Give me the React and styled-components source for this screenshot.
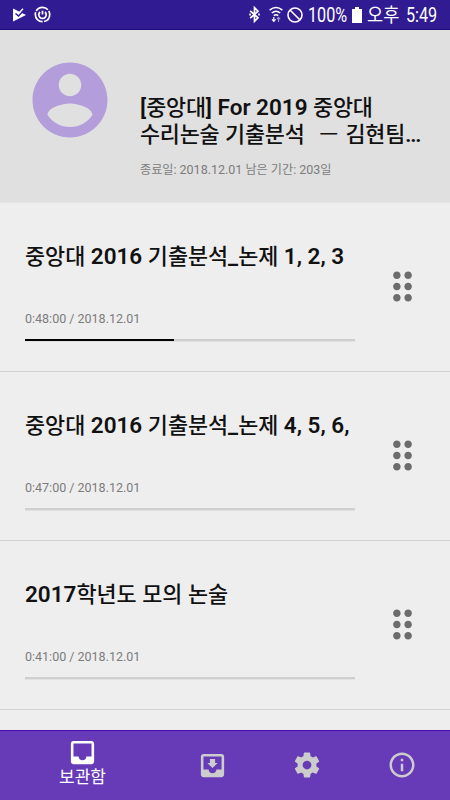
import React from "react";
import styled, { createGlobalStyle } from "styled-components";

const GlobalStyle = createGlobalStyle`
  body {
    margin: 0;
    background: #eeeeee;
    font-family: Roboto, "Noto Sans CJK KR", sans-serif;
  }
  * {
    box-sizing: border-box;
  }
`;

const Screen = styled.div`
  width: 450px;
  height: 800px;
  display: flex;
  flex-direction: column;
  overflow: hidden;
  background: #eeeeee;
`;

const StatusBar = styled.header`
  height: 30px;
  flex-shrink: 0;
  display: flex;
  justify-content: space-between;
  padding: 0 12px;
  background: #311b92;
  border-bottom: 1px solid #1c0a76;
  color: #fff;
`;

const StatusIcons = styled.div`
  display: flex;
  align-items: center;
  gap: 7px;
`;

const StatusInfo = styled.div`
  display: flex;
  align-items: center;
`;

const StatusText = styled.span`
  width: ${(props) => props.$width}px;
  margin-left: ${(props) => props.$gap || 0}px;
  padding-top: 2px;
  font-size: 19.5px;
  line-height: 29px;
  white-space: nowrap;
  transform: scaleX(${(props) => props.$scale});
  transform-origin: left center;
`;

const StatusIcon = styled.svg`
  display: block;
  flex-shrink: 0;
  margin-left: ${(props) => props.$gap || 0}px;
`;

const CourseHeader = styled.section`
  height: 173px;
  flex-shrink: 0;
  display: flex;
  padding: 25px 25px 0;
  background: #e0e0e0;
  border-bottom: 1px solid #e6e6e6;
`;

const CourseText = styled.div`
  flex: 1;
  min-width: 0;
  padding: 39px 0 0 25px;
`;

const CourseTitle = styled.h1`
  margin: 0;
  font-size: 22.5px;
  font-weight: 600;
  line-height: 27px;
  color: #111;
  white-space: pre;
`;

const Caption = styled.p`
  margin: ${(props) => props.$top}px 0 0;
  font-size: 12.5px;
  line-height: 16px;
  color: #7c7c7c;
  white-space: nowrap;
`;

const Hangul = styled.span`
  font-size: 0.97em;
  font-weight: ${(props) => (props.$heading ? 500 : "inherit")};
  line-height: 1;

  ${CourseTitle} & {
    letter-spacing: -0.2px;
  }
`;

const Dash = styled.span`
  margin: 0 1.5px 0 3.5px;
  font-size: 0.92em;
  font-weight: 400;
  line-height: 1;
`;

const Lectures = styled.main`
  flex: 1;
  min-height: 0;
  overflow: hidden;
`;

const LectureRow = styled.article`
  height: 169px;
  display: flex;
  align-items: center;
  justify-content: space-between;
  padding: 0 25px;
  border-bottom: 1px solid #d3d3d3;
`;

const LectureBody = styled.div`
  width: 330px;
  height: 100%;
  padding-top: 39px;
`;

const LectureTitle = styled.h2`
  margin: 0;
  font-size: 22.5px;
  font-weight: 600;
  line-height: 28px;
  color: #111;
  white-space: nowrap;
`;

const Track = styled.div`
  height: 2px;
  margin-top: 12px;
  background: #cfcfcf;
  box-shadow: 0 1px 0 #e2e2e2;
`;

const Fill = styled.div`
  height: 100%;
  background: #000;
`;

const DragHandle = styled.div`
  display: flex;
  padding-bottom: 1px;
  color: #6c6c6c;
`;

const BottomNav = styled.nav`
  height: 70px;
  flex-shrink: 0;
  display: flex;
  border-top: 1px solid #4a0bac;
  background: #673ab7;
`;

const NavItem = styled.button`
  width: ${(props) => props.$width}px;
  display: flex;
  flex-direction: column;
  align-items: center;
  justify-content: ${(props) => (props.$active ? "flex-start" : "center")};
  padding: ${(props) => (props.$active ? "6px 0 0" : "0 0 1px 0")};
  border: none;
  background: none;
  color: ${(props) => (props.$active ? "#fff" : "#cccccc")};
  font-family: inherit;
`;

const NavLabel = styled.span`
  font-size: 17px;
  line-height: 20px;
  margin-top: -1px;
`;

const Icon = ({ d, size }) => (
  <svg width={size} height={size} viewBox="0 0 24 24" fill="currentColor">
    <path d={d} />
  </svg>
);

// Hangul is set slightly smaller than the Latin letters around it
const MixedText = ({ children, heading }) =>
  children.split(/([가-힣]+|ㅡ)/).map((part, i) => {
    if (part === "ㅡ") return <Dash key={i}>{part}</Dash>;
    if (/[가-힣]/.test(part)) {
      return (
        <Hangul key={i} $heading={heading}>
          {part}
        </Hangul>
      );
    }
    return part;
  });

const icons = {
  account:
    "M12 2C6.48 2 2 6.48 2 12s4.48 10 10 10 10-4.48 10-10S17.52 2 12 2zm0 3c1.66 0 3 1.34 3 3s-1.34 3-3 3-3-1.34-3-3 1.34-3 3-3zm0 14.2c-2.5 0-4.71-1.28-6-3.22.03-1.99 4-3.08 6-3.08 1.99 0 5.97 1.09 6 3.08-1.29 1.94-3.5 3.22-6 3.22z",
  drag: "M11 18c0 1.1-.9 2-2 2s-2-.9-2-2 .9-2 2-2 2 .9 2 2zm-2-8c-1.1 0-2 .9-2 2s.9 2 2 2 2-.9 2-2-.9-2-2-2zm0-6c-1.1 0-2 .9-2 2s.9 2 2 2 2-.9 2-2-.9-2-2-2zm6 4c1.1 0 2-.9 2-2s-.9-2-2-2-2 .9-2 2 .9 2 2 2zm0 2c-1.1 0-2 .9-2 2s.9 2 2 2 2-.9 2-2-.9-2-2-2zm0 6c-1.1 0-2 .9-2 2s.9 2 2 2 2-.9 2-2-.9-2-2-2z",
  inbox:
    "M19 3H4.99c-1.11 0-1.98.89-1.98 2L3 19c0 1.1.88 2 1.99 2H19c1.1 0 2-.9 2-2V5c0-1.11-.9-2-2-2zm0 12h-4c0 1.66-1.35 3-3 3s-3-1.34-3-3H4.99V5H19v10z",
  download:
    "M19 3H4.99c-1.11 0-1.98.9-1.98 2L3 19c0 1.1.88 2 1.99 2H19c1.1 0 2-.9 2-2V5c0-1.1-.9-2-2-2zm0 12h-4c0 1.66-1.35 3-3 3s-3-1.34-3-3H4.99V5H19v10zm-3-5h-2V7h-4v3H8l4 4 4-4z",
  settings:
    "M19.43 12.98c.04-.32.07-.64.07-.98s-.03-.66-.07-.98l2.11-1.65c.19-.15.24-.42.12-.64l-2-3.46c-.12-.22-.39-.3-.61-.22l-2.49 1c-.52-.4-1.08-.73-1.69-.98l-.38-2.65C14.46 2.18 14.25 2 14 2h-4c-.25 0-.46.18-.49.42l-.38 2.65c-.61.25-1.17.59-1.69.98l-2.49-1c-.23-.09-.49 0-.61.22l-2 3.46c-.13.22-.07.49.12.64l2.11 1.65c-.04.32-.07.65-.07.98s.03.66.07.98l-2.11 1.65c-.19.15-.24.42-.12.64l2 3.46c.12.22.39.3.61.22l2.49-1c.52.4 1.08.73 1.69.98l.38 2.65c.03.24.24.42.49.42h4c.25 0 .46-.18.49-.42l.38-2.65c.61-.25 1.17-.59 1.69-.98l2.49 1c.23.09.49 0 .61-.22l2-3.46c.12-.22.07-.49-.12-.64l-2.11-1.65zM12 15.5c-1.93 0-3.5-1.57-3.5-3.5s1.57-3.5 3.5-3.5 3.5 1.57 3.5 3.5-1.57 3.5-3.5 3.5z",
  info: "M11 17h2v-6h-2v6zm1-15C6.48 2 2 6.48 2 12s4.48 10 10 10 10-4.48 10-10S17.52 2 12 2zm0 18c-4.41 0-8-3.59-8-8s3.59-8 8-8 8 3.59 8 8-3.59 8-8 8zM11 9h2V7h-2v2z",
};

const lectures = [
  { title: "중앙대 2016 기출분석_논제 1, 2, 3", length: "0:48:00", progress: 45 },
  { title: "중앙대 2016 기출분석_논제 4, 5, 6,", length: "0:47:00", progress: 0 },
  { title: "2017학년도 모의 논술", length: "0:41:00", progress: 0 },
];

const Status = () => (
  <StatusBar>
    <StatusIcons>
      <StatusIcon width="15" height="16" viewBox="0 0 15 16">
        <path d="M1 1.5L14 8L1 14.5Z" fill="#fff" />
        <path d="M3.5 6.5L6.5 9L12 3" fill="none" stroke="#311b92" strokeWidth="1.5" />
        <path d="M7 6L11 1.8" stroke="#fff" strokeWidth="1.4" />
      </StatusIcon>
      <StatusIcon width="17" height="17" viewBox="0 0 17 17" fill="none" stroke="#fff">
        <circle cx="8.5" cy="8.5" r="7.2" strokeWidth="1.7" strokeDasharray="13.6 1.48" strokeDashoffset="4" />
        <path d="M6 6A3.7 3.7 0 1 0 11 6M8.5 4.8V8.5" strokeWidth="1.7" />
      </StatusIcon>
    </StatusIcons>
    <StatusInfo>
      <StatusIcon width="11" height="17" viewBox="0 0 11 17" fill="none" stroke="#fff" strokeWidth="1.7">
        <path d="M1.2 4.8L9 11.8L5.5 15.3V1.7L9 5.2L1.2 12.2" />
        <path d="M.2 8.5H1.8M9.2 8.5H10.8" strokeWidth="1.8" />
      </StatusIcon>
      <StatusIcon $gap={9} width="14" height="17" viewBox="0 0 14 17" fill="none" stroke="#fff" strokeWidth="1.6">
        <path d="M.6 4.2Q7-1.2 13.4 4.2M2.8 7Q7 3.5 11.2 7M4.8 9.7Q7 7.8 9.2 9.7" />
        <path d="M4.8 11V15.3M3 13.4L4.8 15.3L6.6 13.4" strokeWidth="1.2" />
        <path d="M9.5 16V11.5M7.9 13.2L9.5 11.4L11.1 13.2" strokeWidth="1.1" opacity=".55" />
      </StatusIcon>
      <StatusIcon $gap={4} width="16" height="16" viewBox="0 0 16 16" fill="none" stroke="#fff" strokeWidth="1.6">
        <circle cx="8" cy="8" r="7" />
        <path d="M3 3L13 13" />
      </StatusIcon>
      <StatusText $gap={5} $width={43} $scale={0.83}>100%</StatusText>
      <StatusIcon $gap={1} width="10" height="16" viewBox="0 0 10 16" fill="#fff">
        <path d="M3 0H7V2H10V16H0V2H3Z" />
      </StatusIcon>
      <StatusText $gap={5} $width={39} $scale={0.9}>오후</StatusText>
      <StatusText $width={32} $scale={0.83}>5:49</StatusText>
    </StatusInfo>
  </StatusBar>
);

const Lecture = ({ title, length, progress }) => (
  <LectureRow>
    <LectureBody>
      <LectureTitle>
        <MixedText heading>{title}</MixedText>
      </LectureTitle>
      <Caption $top={41}>{length} / 2018.12.01</Caption>
      <Track>
        <Fill style={{ width: `${progress}%` }} />
      </Track>
    </LectureBody>
    <DragHandle>
      <Icon d={icons.drag} size={45} />
    </DragHandle>
  </LectureRow>
);

const Avatar = styled.div`
  width: 90px;
  height: 90px;
  color: #b39ddb;
`;

const App = () => (
  <>
    <GlobalStyle />
    <Screen>
      <Status />
      <CourseHeader>
        <Avatar>
          <Icon d={icons.account} size={90} />
        </Avatar>
        <CourseText>
          <CourseTitle>
            <MixedText heading>{"[중앙대] For 2019 중앙대\n수리논술 기출분석  ㅡ 김현팀…"}</MixedText>
          </CourseTitle>
          <Caption $top={14}>
            <MixedText>종료일: 2018.12.01 남은 기간: 203일</MixedText>
          </Caption>
        </CourseText>
      </CourseHeader>
      <Lectures>
        {lectures.map((lecture) => (
          <Lecture key={lecture.title} {...lecture} />
        ))}
      </Lectures>
      <BottomNav>
        <NavItem $width={165} $active>
          <Icon d={icons.inbox} size={31} />
          <NavLabel>보관함</NavLabel>
        </NavItem>
        <NavItem $width={95}>
          <Icon d={icons.download} size={31} />
        </NavItem>
        <NavItem $width={94}>
          <Icon d={icons.settings} size={30} />
        </NavItem>
        <NavItem $width={96}>
          <Icon d={icons.info} size={30} />
        </NavItem>
      </BottomNav>
    </Screen>
  </>
);

export default App;
